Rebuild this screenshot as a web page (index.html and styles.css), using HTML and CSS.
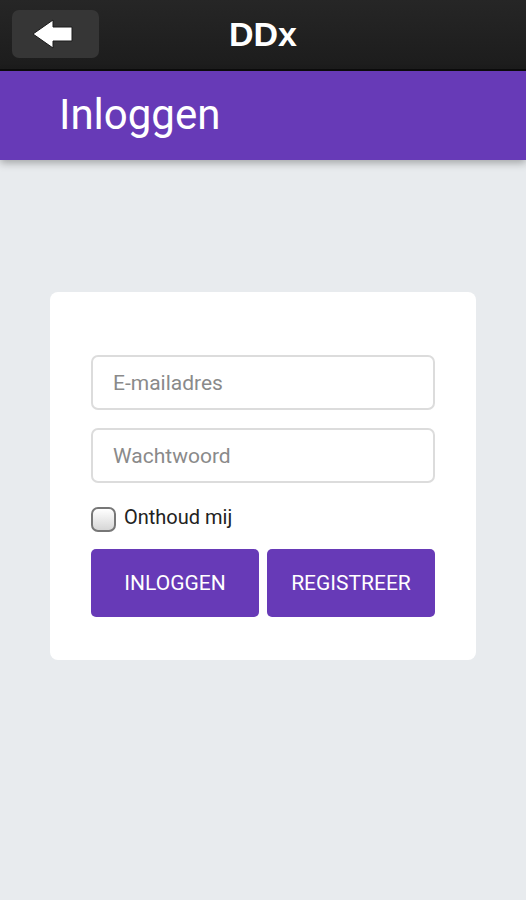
FILE: index.html
```html
<!DOCTYPE html>
<html>
<head>
<meta charset="utf-8">
<link rel="stylesheet" href="styles.css">
</head>
<body>
<div class="topbar">
  <button class="back" aria-label="Terug">
    <svg width="42" height="30" viewBox="0 0 42 30"><path d="M1 15 L21 1 L21 8 L40 8 L40 22 L21 22 L21 29 Z" fill="#fff" stroke="#1a1a1a" stroke-width="1" stroke-linejoin="round"/></svg>
  </button>
  <div class="brand">DDx</div>
  <div class="spacer"></div>
</div>
<header class="pagehead"><h1>Inloggen</h1></header>
<main class="content">
  <form class="card">
    <input class="field" type="text" placeholder="E-mailadres">
    <input class="field" type="password" placeholder="Wachtwoord">
    <label class="remember"><span class="box"></span>Onthoud mij</label>
    <div class="actions">
      <button type="button" class="btn">INLOGGEN</button>
      <button type="button" class="btn">REGISTREER</button>
    </div>
  </form>
</main>
</body>
</html>
```
FILE: styles.css
```css
* { box-sizing: border-box; }
html, body { margin: 0; padding: 0; }
body {
  width: 526px;
  height: 900px;
  background: #e8ebee;
  font-family: Roboto, "Noto Sans", sans-serif;
  overflow: hidden;
}
.topbar {
  height: 71px;
  background: linear-gradient(#262626, #1c1c1c);
  border-bottom: 2px solid #0c0c0c;
  display: flex;
  align-items: center;
  padding: 0 12px;
}
.back {
  width: 87px;
  height: 48px;
  margin-top: -1px;
  border: none;
  border-radius: 7px;
  background: #363636;
  display: flex;
  align-items: center;
  justify-content: center;
  padding: 0;
}
.back svg { margin-left: -6px; }
.brand {
  flex: 1;
  text-align: center;
  color: #fff;
  font-family: "Liberation Sans", Arial, sans-serif;
  font-weight: bold;
  font-size: 34px;
  margin-top: -1px;
}
.spacer { width: 87px; }
.pagehead {
  height: 89px;
  background: #673ab7;
  box-shadow: 0 3px 8px rgba(0,0,0,0.3);
  display: flex;
  align-items: center;
  padding-left: 59px;
}
.pagehead h1 {
  margin: 0;
  color: #fff;
  font-weight: 400;
  font-size: 42px;
  margin-top: -2px;
}
.content {
  padding: 132px 50px 0;
}
.card {
  background: #fff;
  border-radius: 8px;
  padding: 63px 41px 43px;
  display: flex;
  flex-direction: column;
}
.field {
  height: 55px;
  border: 2px solid #dcdcdc;
  border-radius: 7px;
  padding: 0 20px;
  font-family: Roboto, sans-serif;
  font-size: 21px;
  color: #333;
  margin-bottom: 18px;
}
.field::placeholder { color: #8a8a8a; }
.remember {
  display: flex;
  align-items: center;
  font-size: 20px;
  color: #222;
  height: 30px;
  margin-top: 1px;
}
.box {
  width: 25px;
  height: 25px;
  border: 2px solid #777;
  border-radius: 7px;
  background: linear-gradient(#ffffff, #d6d6d6);
  margin-right: 8px;
  margin-top: 4px;
}
.actions {
  display: flex;
  gap: 8px;
  margin-top: 17px;
}
.btn {
  flex: 1;
  height: 68px;
  border: none;
  border-radius: 5px;
  background: #673ab7;
  color: #fff;
  font-family: Roboto, sans-serif;
  font-size: 21px;
  font-weight: 400;
  padding: 0;
}
```
